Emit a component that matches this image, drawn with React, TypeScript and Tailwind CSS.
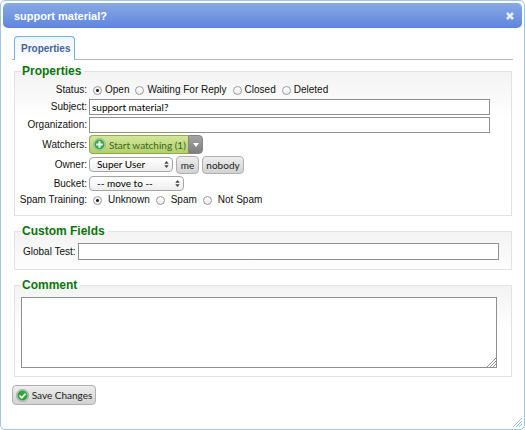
import React, { useState } from "react";

const ui = "font-[Lato,'Noto_Sans',sans-serif]";

function Panel({ title, className, children }: { title: string; className: string; children: React.ReactNode }) {
  return (
    <fieldset className={`mr-[13px] ml-[14px] min-w-0 border border-[#e2e2e2] bg-linear-to-b from-[#f3f3f3] to-white to-[45px] ${className}`}>
      <legend className="ml-1.5 px-px pr-[3px] text-[12px] leading-[14px] font-bold text-[#0a750a]">{title}</legend>
      {children}
    </fieldset>
  );
}

function RadioGroup({ name, label, options, gap }: { name: string; label: string; options: string[]; gap: string }) {
  const [value, setValue] = useState(options[0]);
  return (
    <div role="radiogroup" aria-label={label} className="flex h-[14px] items-center gap-1.5 pl-1">
      {options.map((o) => (
        <label key={o} className={`flex items-center whitespace-nowrap ${gap}`}>
          <input
            type="radio"
            name={name}
            checked={value === o}
            onChange={() => setValue(o)}
            className="size-[9px] shrink-0 appearance-none rounded-full border border-[#9a9a9a] bg-linear-to-b from-white to-[#ececec] checked:bg-[radial-gradient(circle,#222_0,#222_1px,#f4f4f4_2px)]"
          />
          {o}
        </label>
      ))}
    </div>
  );
}

function PopUp({ id, option, className }: { id: string; option: string; className: string }) {
  return (
    <div className={`relative ${className}`}>
      <select
        id={id}
        className={`block h-[15px] w-full appearance-none rounded-[4px] border border-[#a5a5a5] bg-linear-to-b from-white to-[#eeeeee] pl-[7px] text-[10px] leading-[13px] text-black ${ui}`}
      >
        <option>{option}</option>
      </select>
      <svg className="pointer-events-none absolute top-1 right-1 h-[7px] w-[5px]" viewBox="0 0 5 7" fill="#444">
        <path d="M2.5 0L4.7 2.7H.3zM2.5 7L.3 4.3h4.4z" />
      </svg>
    </div>
  );
}

function Grip({ className, color }: { className: string; color: string }) {
  return (
    <svg className={className} viewBox="0 0 9 9" fill="none" stroke={color} strokeWidth="1">
      <path d="M0 9L9 0M3 9L9 3M6 9L9 6" />
    </svg>
  );
}

const button = `flex items-center justify-center rounded-[4px] border border-[#b0b0b0] bg-linear-to-b from-[#eeeeee] to-[#d2d2d2] text-[10px] text-[#222] ${ui}`;
const field = "border border-[#8f8f8f] bg-white text-[10px] text-black";

export default function App() {
  const [subject, setSubject] = useState("support material?");
  return (
    <div role="dialog" aria-labelledby="title" className="relative min-h-screen rounded-[5px] border border-[#9fc6e3] bg-white p-0.5 font-['Liberation_Sans',Arial,sans-serif] text-[10px] leading-[14px] text-[#111]">
      <header className="flex h-[25px] items-center justify-between rounded-[5px] bg-linear-to-b from-[#88a9e4] to-[#6084dc] pr-2 pl-[11px] text-white">
        <h1 id="title" className="text-[11px] font-bold">support material?</h1>
        <button type="button" aria-label="Close" className="flex size-2 items-center justify-center">
          <svg className="size-2" viewBox="0 0 8 8" stroke="#e6edfb" strokeWidth="2.6">
            <path d="M1 1l6 6M7 1L1 7" />
          </svg>
        </button>
      </header>

      <form className="-mx-[3px]" onSubmit={(e) => e.preventDefault()}>
        <nav className="mx-3 mt-2 flex border-b border-[#b9b9b9] pl-0.5">
          <a href="#properties" className="-mb-px flex h-6 items-center rounded-t-[4px] border border-b-0 border-[#74b2e2] bg-linear-to-b from-[#edf5fc] to-white pr-1 pl-1.5 text-[10px] font-bold text-[#44639c]">
            Properties
          </a>
        </nav>

        <Panel title="Properties" className="mt-1 pb-2">
          <div className="mt-[5px] mr-[21px] grid grid-cols-[72px_minmax(0,1fr)] items-center gap-x-0.5 gap-y-0.5">
            <span className="text-right">Status:</span>
            <RadioGroup name="status" label="Status" options={["Open", "Waiting For Reply", "Closed", "Deleted"]} gap="gap-[3px]" />

            <label htmlFor="subject" className="text-right">Subject:</label>
            <input id="subject" value={subject} onChange={(e) => setSubject(e.target.value)} className={`h-4 w-full px-0.5 ${field} ${ui}`} />

            <label htmlFor="organization" className="text-right">Organization:</label>
            <input id="organization" className={`h-4 w-full px-0.5 ${field} ${ui}`} />

            <span className="text-right">Watchers:</span>
            <div className={`flex h-[19px] ${ui}`}>
              <button type="button" className="flex w-[99px] items-center gap-[3px] rounded-l-[4px] border border-r-0 border-[#8fae48] bg-linear-to-b from-[#d3e69b] to-[#b2d06b] pl-[3px] text-[10px] whitespace-nowrap text-[#3d6522]">
                <svg className="size-[13px] shrink-0" viewBox="0 0 13 13">
                  <circle cx="6.5" cy="6.5" r="6.2" fill="#c5cabb" stroke="#98a38b" strokeWidth=".5" />
                  <circle cx="6.5" cy="6.5" r="5" fill="#2eae3d" />
                  <path d="M6.5 3.3v6.4M3.3 6.5h6.4" stroke="white" strokeWidth="2" />
                </svg>
                Start watching (1)
              </button>
              <button type="button" aria-label="More watcher options" className="flex w-[15px] items-center justify-center rounded-r-[4px] border border-[#858585] bg-linear-to-b from-[#a5a5a5] to-[#7e7e7e]">
                <svg className="h-1 w-1.5" viewBox="0 0 6 4" fill="white"><path d="M0 0h6L3 4z" /></svg>
              </button>
            </div>

            <label htmlFor="owner" className="text-right">Owner:</label>
            <div className="flex h-[18px] gap-[3px]">
              <PopUp id="owner" option="Super User" className="mt-px w-[84px]" />
              <button type="button" className={`${button} w-[23px]`}>me</button>
              <button type="button" className={`${button} w-[42px]`}>nobody</button>
            </div>

            <label htmlFor="bucket" className="text-right">Bucket:</label>
            <PopUp id="bucket" option="-- move to --" className="w-[95px]" />

            <span className="text-right whitespace-nowrap">Spam Training:</span>
            <RadioGroup name="spam" label="Spam Training" options={["Unknown", "Spam", "Not Spam"]} gap="gap-1.5" />
          </div>
        </Panel>

        <Panel title="Custom Fields" className="mt-2 pb-[9px]">
          <div className="mt-[5px] mr-3 ml-2 flex items-center gap-0.5">
            <label htmlFor="global" className="whitespace-nowrap">Global Test:</label>
            <input id="global" className={`h-[17px] min-w-0 flex-1 px-0.5 ${field} ${ui}`} />
          </div>
        </Panel>

        <Panel title="Comment" className="mt-2 pb-2">
          <div className="relative mt-[5px] mr-[14px] ml-1.5">
            <textarea aria-label="Comment" className={`block h-[71px] w-full resize-none p-0.5 ${field} ${ui}`} />
            <Grip className="pointer-events-none absolute right-px bottom-px size-[9px]" color="#8f8f8f" />
          </div>
        </Panel>

        <button type="submit" className={`${button} mt-2 mb-5 ml-3 h-5 w-[84px] gap-[3px]`}>
          <svg className="size-[13px] shrink-0" viewBox="0 0 13 13">
            <circle cx="6.5" cy="6.5" r="6.2" fill="#c5c5c5" stroke="#929292" strokeWidth=".5" />
            <circle cx="6.5" cy="6.5" r="5" fill="#25ab32" />
            <path d="M3.5 6.5l2.2 2.3L9.6 4.6" fill="none" stroke="white" strokeWidth="1.8" />
          </svg>
          Save Changes
        </button>
      </form>
      <Grip className="absolute right-0.5 bottom-0.5 size-[9px]" color="#8fbfe6" />
    </div>
  );
}
